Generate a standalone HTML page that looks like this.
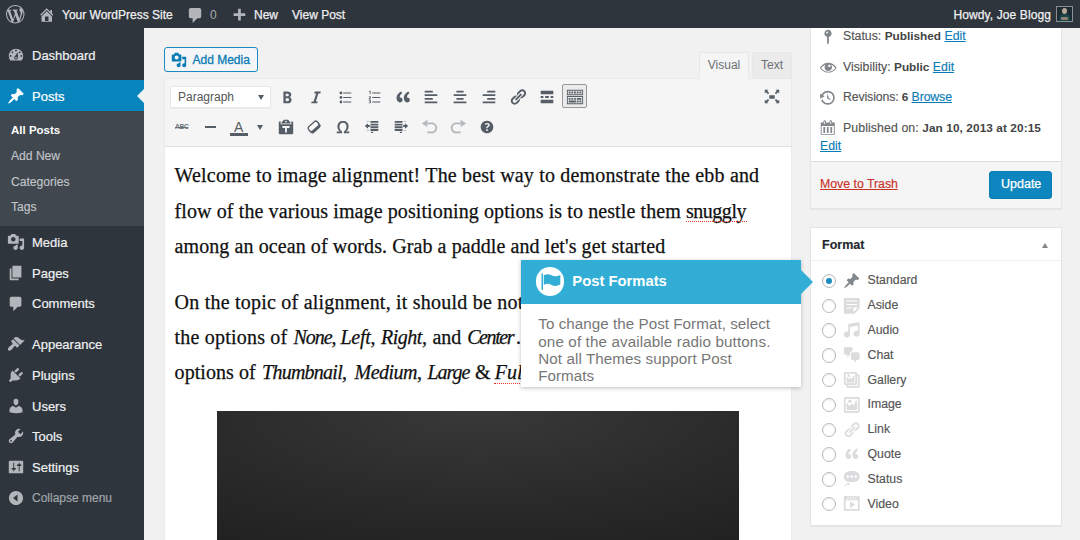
<!DOCTYPE html>
<html>
<head>
<meta charset="utf-8">
<title>Edit Post</title>
<style>
*{box-sizing:border-box;margin:0;padding:0}
html,body{width:1080px;height:540px;overflow:hidden;background:#f1f1f1;font-family:"Liberation Sans",sans-serif;}
body{position:relative}
.abs{position:absolute}
svg{display:block;position:absolute;overflow:visible}
.t{position:absolute;white-space:nowrap;line-height:1}
/* admin bar */
#adminbar{position:absolute;left:0;top:0;width:1080px;height:28px;background:#2e353d;z-index:50}
#adminbar .t{color:#f0f0f1;font-size:12px;top:8.5px;-webkit-text-stroke:0.25px currentColor}
/* sidebar */
#menu{position:absolute;left:0;top:28px;width:144px;height:512px;background:#2e353d}
#menu .top{position:absolute;left:32px;color:#f0f0f1;font-size:13px;-webkit-text-stroke:0.2px currentColor;white-space:nowrap;line-height:1}
#menu .sub{position:absolute;left:11px;color:#c0c4c8;font-size:12.1px;-webkit-text-stroke:0.15px currentColor;white-space:nowrap;line-height:1}
#posts{position:absolute;left:0;top:52px;width:144px;height:31px;background:#0885bd}
#submenu{position:absolute;left:0;top:83px;width:144px;height:115px;background:#40474e}
/* editor */
#tabs .tab{position:absolute;top:52px;height:27px;font-size:12px;color:#6c7075;border:1px solid #e8e8e8;text-align:center;line-height:25px}
#toolbar{position:absolute;left:164px;top:78px;width:628px;height:69px;background:#f5f5f5;border:1px solid #e9e9e9;border-bottom:1px solid #e0e0e0}
#editor{position:absolute;left:164px;top:147px;width:628px;height:393px;background:#fff;border-left:1px solid #ececec;border-right:1px solid #ececec}
.ln{position:absolute;white-space:pre;font-family:"Liberation Serif",serif;font-size:20px;color:#111;line-height:1;-webkit-text-stroke:0.250px #111}
/* meta boxes */
.box{position:absolute;left:810px;width:252px;background:#fff;border:1px solid #e5e5e5;box-shadow:0 1px 1px rgba(0,0,0,.04)}
.m{position:absolute;white-space:nowrap;line-height:1;font-size:12.300px;color:#555;-webkit-text-stroke:0.150px currentColor}
.m b{color:#444;font-size:11.800px;-webkit-text-stroke:0}
a,.lk{color:#0a7cb5;text-decoration:underline}
.rad{width:14.500px;height:14.500px;border-radius:50%;border:1px solid #b4b9be;background:#fff;box-shadow:inset 0 1px 2px rgba(0,0,0,.08)}
</style>
</head>
<body>

<!-- ============ ADMIN BAR ============ -->
<div id="adminbar">
  <svg style="left:6px;top:5px" width="18.5" height="18.5" viewBox="0 0 20 20" fill="#b2b6ba"><path d="M20 10c0-5.51-4.49-10-10-10C4.48 0 0 4.49 0 10c0 5.52 4.48 10 10 10 5.51 0 10-4.48 10-10zM7.78 15.37L4.37 6.22c.55-.02 1.17-.08 1.17-.08.5-.06.44-1.13-.06-1.11 0 0-1.45.11-2.37.11-.18 0-.37 0-.58-.01C4.12 2.69 6.87 1.11 10 1.11c2.33 0 4.45.87 6.05 2.34-.68-.11-1.65.39-1.65 1.58 0 .74.45 1.36.9 2.1.35.61.55 1.36.55 2.46 0 1.49-1.4 5-1.4 5l-3.03-8.37c.54-.02.82-.17.82-.17.5-.05.44-1.25-.06-1.22 0 0-1.44.12-2.38.12-.87 0-2.33-.12-2.33-.12-.5-.03-.56 1.2-.06 1.22l.92.08 1.26 3.41zM17.41 10c.24-.64.74-1.87.43-4.25.7 1.29 1.05 2.71 1.05 4.25 0 3.29-1.73 6.24-4.4 7.78.97-2.59 1.94-5.2 2.92-7.78zM6.1 18.09C3.12 16.65 1.11 13.53 1.11 10c0-1.3.23-2.48.72-3.59C3.25 10.3 4.67 14.2 6.1 18.09zm4.03-6.63l2.58 6.98c-.86.29-1.76.45-2.71.45-.79 0-1.57-.11-2.29-.33.81-2.38 1.62-4.74 2.42-7.1z"/></svg>
  <svg style="left:38px;top:6px" width="17.5" height="17.5" viewBox="0 0 20 20" fill="#b2b6ba"><path d="M16 8.5l1.53 1.53-1.06 1.06L10 4.62l-6.47 6.47-1.06-1.06L10 2.5l4 4v-2h2v4zm-6-2.46l6 5.99V18H4v-5.970zM12 17v-5H8v5h4z"/></svg>
  <svg style="left:186px;top:5.800px" width="19" height="19" viewBox="0 0 20 20" fill="#b2b6ba"><path d="M5 2h9c1.1 0 2 .9 2 2v7c0 1.1-.9 2-2 2h-2l-5 5v-5H5c-1.1 0-2-.9-2-2V4c0-1.1.9-2 2-2z"/></svg>
  <svg style="left:230.250px;top:7px" width="18" height="18" viewBox="0 0 20 20" fill="#b2b6ba"><path d="M17 7v3h-5v5H9v-5H4V7h5V2h3v5h5z"/></svg>

  <span class="t" style="left:62px">Your WordPress Site</span>
  <span class="t" style="left:210px;color:#a7aaad;-webkit-text-stroke:0">0</span>
  <span class="t" style="left:254px">New</span>
  <span class="t" style="left:292px">View Post</span>
  <span class="t" style="left:953.500px;letter-spacing:0.110px">Howdy, Joe Blogg</span>
  <div class="abs" id="avatar" style="left:1056px;top:6px;width:17px;height:16px;background:#1d2b33;border:1px solid #8a8f94;overflow:hidden"><div class="abs" style="left:5px;top:1px;width:5px;height:6px;border-radius:50%;background:#b8a898"></div><div class="abs" style="left:2px;top:7px;width:11px;height:9px;border-radius:4px 4px 0 0;background:#184648"></div><div class="abs" style="left:4px;top:10px;width:7px;height:3px;border-radius:1px;background:#8f7f70"></div></div>
</div>

<!-- ============ SIDEBAR ============ -->
<div id="menu">
  <div id="posts"></div>
  <div id="submenu"></div>
  <span class="top" style="top:21px">Dashboard</span>
  <span class="top" style="top:62px;color:#fff">Posts</span>
  <span class="sub" style="top:97px;color:#fff;font-weight:bold;font-size:11.5px;-webkit-text-stroke:0">All Posts</span>
  <span class="sub" style="top:122px">Add New</span>
  <span class="sub" style="top:148px">Categories</span>
  <span class="sub" style="top:173px">Tags</span>
  <span class="top" style="top:208px">Media</span>
  <span class="top" style="top:239px">Pages</span>
  <span class="top" style="top:269px">Comments</span>
  <span class="top" style="top:310px">Appearance</span>
  <span class="top" style="top:341px">Plugins</span>
  <span class="top" style="top:372px">Users</span>
  <span class="top" style="top:402px">Tools</span>
  <span class="top" style="top:433px">Settings</span>
  <span class="top" style="top:464px;font-size:12px;color:#a0a5aa">Collapse menu</span>
  <svg style="left:7.0px;top:17.5px" width="18" height="18" viewBox="0 0 20 20" fill="#b2b6ba"><path d="M3.76 16h12.48c1.1-1.37 1.76-3.11 1.76-5 0-4.42-3.58-8-8-8s-8 3.58-8 8c0 1.89.66 3.63 1.76 5zM10 4c.55 0 1 .45 1 1s-.45 1-1 1-1-.45-1-1 .45-1 1-1zM6 6c.55 0 1 .45 1 1s-.45 1-1 1-1-.45-1-1 .45-1 1-1zm8 0c.55 0 1 .45 1 1s-.45 1-1 1-1-.45-1-1 .45-1 1-1zm-5.370 5.550L12 7v6c0 1.1-.9 2-2 2s-2-.9-2-2c0-.57.24-1.080.63-1.450zM4 10c.55 0 1 .45 1 1s-.45 1-1 1-1-.45-1-1 .45-1 1-1zm12 0c.55 0 1 .45 1 1s-.45 1-1 1-1-.45-1-1 .45-1 1-1zm-5 3c0-.55-.45-1-1-1s-1 .45-1 1 .45 1 1 1 1-.45 1-1z"/></svg>
  <svg style="left:7.0px;top:58.5px" width="18" height="18" viewBox="0 0 20 20" fill="#fff"><path d="M10.44 3.02l1.82-1.82 6.36 6.35-1.83 1.82c-1.05-.68-2.48-.57-3.41.36l-.75.75c-.92.93-1.04 2.35-.35 3.41l-1.83 1.82-2.41-2.41-2.8 2.79c-.42.42-3.38 2.71-3.8 2.29s1.86-3.39 2.28-3.81l2.79-2.79L4.1 9.36l1.83-1.82c1.05.69 2.48.57 3.4-.36l.75-.75c.93-.92 1.05-2.35.36-3.41z"/></svg>
  <svg style="left:7.0px;top:204.5px" width="18" height="18" viewBox="0 0 20 20" fill="#b2b6ba"><path d="M13 11V4c0-.55-.45-1-1-1h-1.670L9 1H5L3.670 3H2c-.55 0-1 .45-1 1v7c0 .55.45 1 1 1h10c.55 0 1-.45 1-1zM7 4.500c1.380 0 2.500 1.120 2.500 2.500S8.380 9.500 7 9.500 4.500 8.380 4.500 7 5.620 4.500 7 4.500zM14 6h5v10.500c0 1.380-1.120 2.500-2.500 2.500S14 17.880 14 16.500s1.120-2.500 2.500-2.500c.170 0 .340.020.500.050V9h-3V6zm-4 8.050V13h2v3.500c0 1.380-1.120 2.500-2.500 2.500S7 17.880 7 16.500 8.120 14 9.500 14c.170 0 .340.020.500.050z"/></svg>
  <svg style="left:7.0px;top:235.5px" width="18" height="18" viewBox="0 0 20 20" fill="#b2b6ba"><path d="M6 15V2h10v13H6zm-1 1h8v2H3V5h2v11z"/></svg>
  <svg style="left:7.0px;top:266.5px" width="18" height="18" viewBox="0 0 20 20" fill="#b2b6ba"><path d="M5 2h9c1.1 0 2 .9 2 2v7c0 1.1-.9 2-2 2h-2l-5 5v-5H5c-1.1 0-2-.9-2-2V4c0-1.1.9-2 2-2z"/></svg>
  <svg style="left:7.0px;top:307.0px" width="18" height="18" viewBox="0 0 20 20" fill="#b2b6ba"><path d="M14.480 11.060L7.410 3.990l1.500-1.500c.5-.560 2.300-.470 3.510.320 1.210.8 1.430 1.280 2.910 2.100 1.180.640 2.450 1.260 4.450.850zm-.710.710L6.700 4.700 4.930 6.470c-.390.390-.390 1.020 0 1.410l1.060 1.060c.390.390.390 1.030 0 1.420-.6.600-1.430 1.110-2.210 1.690-.350.260-.7.530-1.010.840C1.430 14.230.400 16.080 1.400 17.070c.990 1 2.840-.030 4.180-1.360.310-.310.580-.660.850-1.020.570-.780 1.080-1.610 1.690-2.210.390-.390 1.020-.390 1.410 0l1.060 1.060c.390.390 1.020.390 1.410 0z"/></svg>
  <svg style="left:7.0px;top:338.0px" width="18" height="18" viewBox="0 0 20 20" fill="#b2b6ba"><path d="M13.110 4.360L9.870 7.600 8 5.730l3.240-3.240c.350-.340 1.050-.200 1.560.320.520.510.660 1.210.310 1.550zm-8 1.770l.910-1.120 9.010 9.010-1.190.840c-.710.710-2.630 1.160-3.820 1.160H6.140L4.900 17.260c-.590.590-1.540.590-2.120 0-.590-.580-.590-1.530 0-2.120l1.240-1.240v-3.880c0-1.130.400-3.190 1.090-3.890zm7.260 3.970l3.240-3.240c.340-.350 1.040-.210 1.550.310.520.510.660 1.210.310 1.550l-3.240 3.250z"/></svg>
  <svg style="left:7.0px;top:368.5px" width="18" height="18" viewBox="0 0 20 20" fill="#b2b6ba"><path d="M10 9.250c-2.270 0-2.730-3.440-2.730-3.440C7 4.020 7.820 2 9.970 2c2.160 0 2.980 2.020 2.710 3.810 0 0-.410 3.440-2.680 3.440zm0 2.570L12.720 10c2.390 0 4.520 2.330 4.520 4.530v2.490s-3.650 1.130-7.240 1.130c-3.650 0-7.240-1.130-7.240-1.130v-2.490c0-2.250 1.940-4.480 4.470-4.480z"/></svg>
  <svg style="left:7.0px;top:399.0px" width="18" height="18" viewBox="0 0 20 20" fill="#b2b6ba"><path d="M16.680 9.770c-1.340 1.340-3.300 1.670-4.950.990l-5.410 6.520c-.990.990-2.590.990-3.580 0s-.990-2.590 0-3.570l6.520-5.420c-.680-1.650-.350-3.610.990-4.950 1.280-1.280 3.120-1.620 4.720-1.060l-2.890 2.890 2.820 2.820 2.860-2.870c.530 1.580.180 3.390-1.080 4.650zM3.810 16.210c.400.390 1.040.390 1.430 0 .400-.400.400-1.040 0-1.430-.390-.400-1.030-.400-1.430 0-.390.390-.390 1.030 0 1.430z"/></svg>
  <svg style="left:7.0px;top:429.5px" width="18" height="18" viewBox="0 0 20 20" fill="#b2b6ba"><path d="M18 16V4c0-.55-.45-1-1-1H3c-.55 0-1 .45-1 1v12c0 .55.45 1 1 1h14c.55 0 1-.45 1-1zM8 11h1c.55 0 1 .45 1 1s-.45 1-1 1H8v1.500c0 .280-.220.500-.500.500s-.500-.220-.500-.500V13H6c-.55 0-1-.45-1-1s.45-1 1-1h1V5.500c0-.280.220-.500.500-.500s.500.220.500.500V11zm5-2h-1c-.55 0-1-.45-1-1s.45-1 1-1h1V5.500c0-.280.220-.500.500-.500s.500.220.500.500V7h1c.55 0 1 .45 1 1s-.45 1-1 1h-1v5.500c0 .280-.220.500-.500.500s-.500-.220-.500-.500V9z"/></svg>
  <svg style="left:7.0px;top:460.5px" width="18" height="18" viewBox="0 0 20 20" fill="#b2b6ba" fill-rule="evenodd"><path d="M10 2.160c4.330 0 7.840 3.510 7.840 7.840s-3.510 7.840-7.840 7.840S2.160 14.330 2.160 10 5.670 2.160 10 2.160zM11.700 14V6L6.700 10z"/></svg>
</div>
<!-- active arrow -->
<div class="abs" style="left:137px;top:89px;width:0;height:0;border-top:7px solid transparent;border-bottom:7px solid transparent;border-right:7px solid #f1f1f1"></div>

<!-- ============ ADD MEDIA ============ -->
<div class="abs" id="addmedia" style="left:164px;top:47px;width:94px;height:25px;border:1px solid #1a8ac0;border-radius:3px;background:#f3f5f6"></div>
<svg style="left:171.0px;top:52.0px" width="16" height="16" viewBox="0 0 20 20" fill="#0a7cb5"><path d="M13 11V4c0-.55-.45-1-1-1h-1.670L9 1H5L3.670 3H2c-.55 0-1 .45-1 1v7c0 .55.45 1 1 1h10c.55 0 1-.45 1-1zM7 4.500c1.380 0 2.500 1.120 2.500 2.500S8.380 9.500 7 9.500 4.500 8.380 4.500 7 5.620 4.500 7 4.500zM14 6h5v10.500c0 1.380-1.120 2.500-2.500 2.500S14 17.880 14 16.500s1.120-2.500 2.500-2.500c.170 0 .340.020.500.050V9h-3V6zm-4 8.050V13h2v3.500c0 1.380-1.120 2.500-2.500 2.500S7 17.880 7 16.500 8.120 14 9.500 14c.170 0 .340.020.500.050z"/></svg>
<span class="t" style="left:192.500px;top:54px;font-size:12px;color:#0a7cb5;-webkit-text-stroke:0.3px #0a7cb5">Add Media</span>

<!-- ============ TABS ============ -->
<div id="tabs">
  <div class="tab" style="left:699px;width:50px;background:#f5f5f5;border-bottom-color:#f5f5f5;z-index:2">Visual</div>
  <div class="tab" style="left:752px;width:40px;background:#ebebeb;">Text</div>
</div>

<!-- ============ TOOLBAR ============ -->
<div id="toolbar"></div>
<div class="abs" style="left:169.500px;top:85.500px;width:101px;height:22px;background:#fff;border:1px solid #e8e8e8;box-shadow:0 1px 1px rgba(0,0,0,.04)"></div>
<span class="t" style="left:178px;top:91px;font-size:12px;color:#555">Paragraph</span>
<div class="abs" style="left:258px;top:94.500px;width:0;height:0;border-left:3.300px solid transparent;border-right:3.300px solid transparent;border-top:5.500px solid #555d66"></div>
<div class="abs" style="left:562px;top:84px;width:25px;height:24px;background:#ebebeb;border:1px solid #999;border-radius:2px"></div>
<svg style="left:278.3px;top:87.7px" width="18" height="18" viewBox="0 0 20 20" fill="#555d66"><path d="M6 4v13h4.540c1.370 0 2.460-.330 3.260-1 .8-.660 1.200-1.580 1.200-2.770 0-.840-.170-1.510-.510-2.010s-.9-.850-1.670-1.030v-.090c.570-.1 1.020-.4 1.360-.9s.510-1.130.510-1.910c0-1.140-.390-1.980-1.170-2.500C12.750 4.260 11.500 4 9.780 4H6zm2.570 5.150V6.260h1.360c.730 0 1.270.110 1.610.320.340.220.510.580.510 1.070 0 .540-.160.920-.470 1.150s-.820.350-1.510.350h-1.500zm0 2.190h1.600c1.440 0 2.160.530 2.160 1.610 0 .6-.170 1.050-.510 1.340s-.860.430-1.570.430H8.570v-3.380z"/></svg>
<svg style="left:307.1px;top:87.7px" width="18" height="18" viewBox="0 0 20 20" fill="#555d66"><path d="M14.780 6h-2.130l-2.800 9h2.120l-.620 2H4.600l.620-2h2.140l2.800-9H8.030l.620-2h6.750z"/></svg>
<svg style="left:335.9px;top:87.7px" width="18" height="18" viewBox="0 0 20 20" fill="#555d66"><path d="M5.500 7C4.670 7 4 6.330 4 5.500 4 4.680 4.670 4 5.500 4 6.320 4 7 4.680 7 5.500 7 6.330 6.320 7 5.500 7zM8 5h9v1H8V5zm-2.500 7c-.830 0-1.500-.670-1.500-1.500C4 9.680 4.670 9 5.500 9c.820 0 1.500.680 1.500 1.500 0 .830-.680 1.500-1.500 1.500zM8 10h9v1H8v-1zm-2.500 7c-.830 0-1.500-.670-1.500-1.500 0-.820.670-1.500 1.500-1.500.820 0 1.500.680 1.500 1.500 0 .830-.680 1.500-1.500 1.500zM8 15h9v1H8v-1z"/></svg>
<svg style="left:364.7px;top:87.7px" width="18" height="18" viewBox="0 0 20 20" fill="#555d66"><path d="M8 5h9v1H8zM8 10h9v1H8zM8 15h9v1H8z"/><path d="M5.300 3h.9v4h-.9V4.200l-.8.500-.3-.6zM4.100 9.200c.4-.4 1-.5 1.500-.4.600.1 1 .6.900 1.200-.1.700-.8 1.100-1.300 1.700h1.400v.7H4v-.6c.5-.6 1.300-1.100 1.600-1.700.1-.3-.1-.6-.4-.6-.3 0-.5.200-.8.400zM4.100 13.400c.7-.4 1.700-.5 2.200 0 .4.400.3 1.100-.3 1.400.7.200.9.900.6 1.500-.5.800-1.800.8-2.600.4v-.7c.5.300 1.200.4 1.600.1.300-.3.100-.7-.3-.8h-.7v-.6c.4 0 .9 0 1-.4.100-.4-.4-.5-.7-.4-.2 0-.4.200-.6.300z"/></svg>
<svg style="left:393.5px;top:87.7px" width="18" height="18" viewBox="0 0 20 20" fill="#555d66"><path d="M9.490 13.220c0-.740-.2-1.380-.610-1.900-.620-.780-1.830-.880-2.530-.720-.290-1.650 1.110-3.750 2.920-4.650L7.880 4c-2.730 1.300-5.420 4.280-4.960 8.050C3.210 14.430 4.590 16 6.540 16c.850 0 1.560-.250 2.120-.750s.830-1.180.830-2.030zm8.050 0c0-.740-.2-1.380-.610-1.900-.630-.780-1.830-.880-2.530-.720-.290-1.650 1.110-3.750 2.920-4.650L15.930 4c-2.730 1.300-5.410 4.280-4.950 8.050.290 2.380 1.660 3.950 3.610 3.950.850 0 1.560-.250 2.120-.750s.830-1.180.830-2.030z"/></svg>
<svg style="left:422.3px;top:87.7px" width="18" height="18" viewBox="0 0 20 20" fill="#555d66"><path d="M12 5V3H3v2h9zm5 4V7H3v2h14zm-5 4v-2H3v2h9zm5 4v-2H3v2h14z"/></svg>
<svg style="left:451.1px;top:87.7px" width="18" height="18" viewBox="0 0 20 20" fill="#555d66"><path d="M14 5V3H6v2h8zm3 4V7H3v2h14zm-3 4v-2H6v2h8zm3 4v-2H3v2h14z"/></svg>
<svg style="left:479.9px;top:87.7px" width="18" height="18" viewBox="0 0 20 20" fill="#555d66"><path d="M17 5V3H8v2h9zm0 4V7H3v2h14zm0 4v-2H8v2h9zm0 4v-2H3v2h14z"/></svg>
<svg style="left:508.7px;top:87.7px" width="18" height="18" viewBox="0 0 20 20" fill="#555d66"><path d="M17.740 2.760c1.680 1.690 1.680 4.410 0 6.100l-1.530 1.520c-1.120 1.120-2.700 1.470-4.140 1.090l2.620-2.610.760-.770.760-.760c.840-.840.840-2.200 0-3.040-.840-.850-2.200-.850-3.040 0l-.770.760-3.380 3.380c-.370-1.440-.020-3.020 1.100-4.140l1.520-1.530c1.690-1.680 4.420-1.680 6.100 0zM8.590 13.430l5.340-5.340c.420-.420.420-1.100 0-1.520-.440-.430-1.130-.390-1.530 0l-5.330 5.340c-.420.420-.420 1.100 0 1.520.440.430 1.130.390 1.520 0zm-.760 2.290l4.140-4.150c.380 1.440.030 3.020-1.090 4.140l-1.520 1.530c-1.690 1.680-4.410 1.680-6.100 0-1.680-1.680-1.680-4.420 0-6.100l1.530-1.520c1.120-1.120 2.700-1.470 4.140-1.100l-4.140 4.150c-.850.840-.850 2.200 0 3.050.840.840 2.200.840 3.040 0z"/></svg>
<svg style="left:537.5px;top:87.7px" width="18" height="18" viewBox="0 0 20 20" fill="#555d66"><path d="M17 7V3H3v4h14zM6 11V9H3v2h3zm6 0V9H8v2h4zm5 0V9h-3v2h3zm0 6v-4H3v4h14z"/></svg>
<svg style="left:565.7px;top:87.7px" width="18" height="18" viewBox="0 0 20 20" fill="#555d66"><path d="M19 2v6H1V2h18zm-1 5V3H2v4h16zM5 4v2H3V4h2zm3 0v2H6V4h2zm3 0v2H9V4h2zm3 0v2h-2V4h2zm3 0v2h-2V4h2zm2 5v9H1V9h18zm-1 8v-7H2v7h16zM5 11v2H3v-2h2zm3 0v2H6v-2h2zm3 0v2H9v-2h2zm6 0v2h-5v-2h5zm-6 3v2H3v-2h8zm3 0v2h-2v-2h2zm3 0v2h-2v-2h2z"/></svg>
<svg style="left:763.0px;top:87.7px" width="18" height="18" viewBox="0 0 20 20" fill="#555d66"><path d="M7 8h6v4H7zM2 13v4h4l-1.300-1.300L6.900 13.500 5.500 12.100 3.300 14.300zM14 2l1.300 1.300L13.100 5.500l1.400 1.400 2.200-2.200L18 6V2zM6 2H2v4l1.300-1.300L5.500 6.900 6.900 5.500 4.700 3.300zM14.500 12.100L13.100 13.500l2.200 2.200L14 17h4v-4l-1.300 1.300z"/></svg>
<svg style="left:276.5px;top:117.9px" width="18" height="18" viewBox="0 0 20 20" fill="#555d66"><path d="M12.380 2L15 5v1H5V5l2.640-3h4.740zM10 5c.55 0 1-.44 1-1 0-.55-.45-1-1-1s-1 .45-1 1c0 .56.45 1 1 1zm5.450-1H17c.55 0 1 .45 1 1v12c0 .56-.45 1-1 1H3c-.55 0-1-.44-1-1V5c0-.55.45-1 1-1h1.550L4 4.630V7h12V4.630zM14 11V9H6v2h3v5h2v-5h3z"/></svg>
<svg style="left:0;top:0" width="1080" height="540" viewBox="0 0 1080 540"><g transform="rotate(-42 313.900 126.800)"><rect x="308.200" y="124.300" width="11.400" height="6.400" rx="2" fill="#555d66" stroke="#555d66" stroke-width="1.300"/><rect x="308.200" y="123.300" width="11.400" height="5.800" rx="1.900" fill="#fdfdfd" stroke="#555d66" stroke-width="1.300"/></g></svg>
<svg style="left:334.1px;top:117.9px" width="18" height="18" viewBox="0 0 20 20" fill="#555d66"><path d="M10 5.400c1.270 0 2.240.360 2.910 1.080.660.710 1 1.760 1 3.130 0 1.280-.230 2.370-.690 3.270-.470.890-1.270 1.520-2.220 2.120v2h6v-2h-3.690c.920-.640 1.620-1.340 2.120-2.340.490-.990.740-2.130.740-3.410 0-1.790-.550-3.210-1.650-4.260-1.090-1.040-2.600-1.560-4.520-1.560-1.930 0-3.440.520-4.540 1.560C4.360 6.030 3.800 7.450 3.800 9.250c0 1.280.250 2.420.750 3.400.490.990 1.200 1.700 2.120 2.350H3v2h6v-2c-.980-.640-1.800-1.280-2.240-2.170-.450-.890-.670-1.960-.670-3.220 0-1.370.330-2.410 1-3.130C7.750 5.760 8.720 5.400 10 5.400z"/></svg>
<svg style="left:362.9px;top:117.9px" width="18" height="18" viewBox="0 0 20 20" fill="#555d66"><path d="M8.300 3.300h8.700v2.100H8.300zM8.300 6.300h8.700v2.100H8.300zM8.300 9.300h8.700v2.100H8.300zM8.300 12.300h8.700v2.100H8.300zM9 15.400h2.300v1.200H9zM2 8.800l3.600-3v2h2v2.100h-2v2z"/><path opacity=".45" d="M4 3.300h3v.9H4zM4 13.400h3v.9H4z"/></svg>
<svg style="left:391.7px;top:117.9px" width="18" height="18" viewBox="0 0 20 20" fill="#555d66"><path d="M3 3.300h8.700v2.100H3zM3 6.300h8.700v2.100H3zM3 9.300h8.700v2.100H3zM3 12.300h8.700v2.100H3zM8.700 15.400h2.300v1.200H8.700zM18 8.800l-3.600-3v2h-2v2.100h2v2z"/><path opacity=".45" d="M13 3.300h3v.9h-3zM13 13.400h3v.9h-3z"/></svg>
<svg style="left:420.5px;top:117.9px" width="18" height="18" viewBox="0 0 20 20" fill="#b4b9be"><path d="M12 5H7V2L1 6l6 4V7h5c2.200 0 4 1.800 4 4s-1.800 4-4 4H7v2h5c3.300 0 6-2.700 6-6s-2.700-6-6-6z"/></svg>
<svg style="left:449.3px;top:117.9px" width="18" height="18" viewBox="0 0 20 20" fill="#b4b9be"><path d="M8 5h5V2l6 4-6 4V7H8c-2.200 0-4 1.800-4 4s1.800 4 4 4h5v2H8c-3.300 0-6-2.700-6-6s2.700-6 6-6z"/></svg>
<svg style="left:478.1px;top:117.9px" width="18" height="18" viewBox="0 0 20 20" fill="#555d66"><path d="M17 10c0-3.870-3.140-7-7-7-3.870 0-7 3.130-7 7s3.130 7 7 7c3.860 0 7-3.130 7-7zm-6.300 1.480H9.140v-.430c0-.380.080-.7.240-.980s.460-.570.880-.890c.410-.290.680-.530.810-.710.140-.180.200-.390.200-.620 0-.250-.090-.440-.280-.580-.190-.130-.450-.190-.790-.190-.580 0-1.250.190-2 .570l-.640-1.280c.870-.490 1.800-.740 2.770-.740.810 0 1.450.2 1.920.580.480.390.710.910.710 1.550 0 .430-.090.800-.290 1.110-.190.320-.570.670-1.110 1.060-.380.280-.610.490-.710.630-.1.150-.150.340-.150.570v.350zm-1.470 2.740c-.180-.170-.270-.420-.270-.730 0-.330.080-.580.260-.750s.430-.250.770-.250c.320 0 .570.090.750.260s.270.420.270.740c0 .3-.090.550-.270.720-.180.180-.430.270-.750.270-.330 0-.580-.090-.760-.260z"/></svg>
<span class="t" style="left:175px;top:123.700px;font-size:6.600px;font-weight:bold;color:#6a7178;letter-spacing:-0.200px">ABC</span>
<div class="abs" style="left:174.500px;top:126.500px;width:13.500px;height:1px;background:#6a7178"></div>
<div class="abs" style="left:205px;top:125.700px;width:11px;height:2px;background:#555d66"></div>
<span class="t" style="left:234px;top:119.5px;font-size:14px;color:#555d66">A</span>
<div class="abs" style="left:230px;top:133px;width:18px;height:2.500px;background:#555d66"></div>
<div class="abs" style="left:257px;top:124.800px;width:0;height:0;border-left:3.200px solid transparent;border-right:3.200px solid transparent;border-top:5.200px solid #555d66"></div>

<!-- ============ EDITOR ============ -->
<div id="editor"></div>
<!--LINES-->
<span class="ln" style="left:174.6px;top:165.2px;letter-spacing:0.177px">Welcome to image alignment! The best way to demonstrate the ebb and</span>
<span class="ln" style="left:174.6px;top:200.5px;letter-spacing:0.101px">flow of the various image positioning options is to nestle them </span>
<span class="ln" id="snug" style="left:686.0px;top:200.5px;letter-spacing:-0.478px">snuggly</span>
<span class="ln" style="left:174.6px;top:235.7px;letter-spacing:0.084px">among an ocean of words. Grab a paddle and let&#x27;s get started</span>
<span class="ln" style="left:174.6px;top:291.8px;letter-spacing:0.221px">On the topic of alignment, it should be not</span>
<span class="ln" style="left:523.5px;top:291.8px">ed that users can choose from</span>
<span class="ln" style="left:174.6px;top:326.8px;letter-spacing:0.200px">the options of</span>
<span class="ln" style="left:293.5px;top:326.8px;letter-spacing:-1.055px;font-style:italic">None</span>
<span class="ln" style="left:331.5px;top:326.8px;letter-spacing:-1.500px">,</span>
<span class="ln" style="left:340.5px;top:326.8px;letter-spacing:-0.281px;font-style:italic">Left</span>
<span class="ln" style="left:370.5px;top:326.8px;letter-spacing:-1.500px">,</span>
<span class="ln" style="left:381.0px;top:326.8px;letter-spacing:-0.491px;font-style:italic">Right,</span>
<span class="ln" style="left:432.6px;top:326.8px;letter-spacing:-0.130px">and</span>
<span class="ln" style="left:467.2px;top:326.8px;letter-spacing:-1.423px;font-style:italic">Center</span>
<span class="ln" style="left:516.0px;top:326.8px;letter-spacing:-1.800px">.</span>
<span class="ln" style="left:519.2px;top:326.8px"> In addition, they also get the</span>
<span class="ln" style="left:174.6px;top:361.8px;letter-spacing:0.054px">options of</span>
<span class="ln" style="left:262.0px;top:361.8px;letter-spacing:-0.743px;font-style:italic">Thumbnail</span>
<span class="ln" style="left:342.0px;top:361.8px;letter-spacing:-1.600px">,</span>
<span class="ln" style="left:354.6px;top:361.8px;letter-spacing:-0.524px;font-style:italic">Medium</span>
<span class="ln" style="left:417.0px;top:361.8px;letter-spacing:-1.600px">,</span>
<span class="ln" style="left:427.5px;top:361.8px;letter-spacing:-1.049px;font-style:italic">Large</span>
<span class="ln" style="left:475.0px;top:361.8px;letter-spacing:-1.962px">&amp;</span>
<span class="ln" id="full" style="left:494.7px;top:361.8px;font-style:italic">Fullsize</span>
<!--/LINES-->
<div class="abs" style="left:686px;top:220.500px;width:61px;height:0;border-top:1.800px dotted #e8392b"></div>
<div class="abs" style="left:494px;top:383px;width:60px;height:0;border-top:1.800px dotted #e8392b"></div>
<div class="abs" id="darkimg" style="left:217px;top:411px;width:522px;height:129px;background:radial-gradient(ellipse 90% 120% at 50% 0%,#393939 0%,#2b2b2b 55%,#212121 100%)"></div>

<!-- ============ PUBLISH BOX ============ -->
<div class="box" style="top:-10px;height:219px"></div>
<div class="abs" style="left:811px;top:161px;width:250px;height:47px;background:#f5f5f5;border-top:1px solid #ddd"></div>
<span class="m" style="left:843px;top:30px">Status: <b>Published</b> <span class="lk">Edit</span></span>
<span class="m" style="left:843px;top:61px">Visibility: <b>Public</b> <span class="lk">Edit</span></span>
<span class="m" style="left:843px;top:91px;letter-spacing:-0.120px">Revisions: <b>6</b> <span class="lk">Browse</span></span>
<span class="m" style="left:843px;top:122px;letter-spacing:0.095px">Published on: <b>Jan 10, 2013 at 20:15</b></span>
<span class="m" style="left:820px;top:140px"><span class="lk">Edit</span></span>
<span class="m" style="left:820px;top:178px;color:#c8322b;text-decoration:underline">Move to Trash</span>
<div class="abs" style="left:989px;top:171px;width:63px;height:28px;background:#0d85be;border-radius:3px;border:1px solid #0b7db3"></div>
<span class="t" style="left:1001px;top:178px;font-size:12.500px;color:#fff;-webkit-text-stroke:0.250px #fff">Update</span>
<svg style="left:819.3px;top:27.5px" width="18" height="18" viewBox="0 0 20 20" fill="#82878c"><path d="M14 6c0 1.860-1.280 3.410-3 3.860V16c0 1-2 2-2 2V9.860c-1.720-.450-3-2-3-3.860 0-2.210 1.790-4 4-4s4 1.790 4 4zM8 5c0 .55.45 1 1 1s1-.45 1-1-.45-1-1-1-1 .45-1 1z"/></svg>
<svg style="left:818.8px;top:57.7px" width="18.5" height="18.5" viewBox="0 0 20 20" fill="#82878c"><path d="M18.300 9.500C15 4.900 8.500 3.800 3.900 7.200c-1.200.9-2.200 2-2.900 3.300.7 1.300 1.700 2.400 2.900 3.300 4.600 3.400 11.100 2.300 14.400-2.300.3-.4.500-.8.700-1.200-.2-.4-.4-.7-.7-1.100zM10.300 7.600c.5-.5 1.300-.5 1.800 0s.5 1.300 0 1.800-1.300.5-1.800 0-.5-1.300 0-1.800zM10 14.900C6.900 14.900 4 13.300 2.300 10.700 3.500 9 5.100 7.800 7 7.200c-.7.800-1 1.700-1 2.700 0 2.200 1.700 4.100 4 4.100 2.200 0 4.100-1.700 4.100-4v-.1c0-1-.4-2-1.100-2.700 1.900.6 3.500 1.800 4.700 3.500-1.700 2.600-4.600 4.200-7.700 4.200z"/></svg>
<svg style="left:819.4px;top:88.5px" width="17.5" height="17.5" viewBox="0 0 20 20" fill="#82878c"><path d="M13.650 2.880c3.930 2.010 5.480 6.840 3.470 10.770s-6.830 5.480-10.770 3.470c-1.870-.960-3.200-2.560-3.860-4.400l1.640-1.030c.450 1.570 1.520 2.950 3.080 3.760 3.010 1.540 6.690.350 8.230-2.660 1.550-3.010.360-6.690-2.650-8.240C9.780 3.010 6.100 4.200 4.560 7.210l1.880.970-4.950 3.080-.390-5.820 1.780.910C4.900 2.400 9.750.890 13.650 2.880zm-4.360 7.830C9.110 10.530 9 10.280 9 10c0-.070.030-.120.040-.190h-.010L10 5l.970 4.810L14 13l-4.500-2.120.020-.020c-.080-.040-.160-.090-.230-.150z"/></svg>
<svg style="left:819.4px;top:118.7px" width="17.5" height="17.5" viewBox="0 0 20 20" fill="#82878c"><path d="M15 4h3v14H2V4h3V3c0-.830.670-1.500 1.500-1.500S8 2.170 8 3v1h4V3c0-.830.670-1.500 1.500-1.500S15 2.170 15 3v1zM6 3v2.500c0 .280.220.500.500.500s.500-.220.500-.500V3c0-.280-.220-.500-.500-.500S6 2.720 6 3zm7 0v2.500c0 .280.220.500.500.500s.500-.220.500-.500V3c0-.280-.220-.500-.500-.500s-.500.220-.500.500zm4 14V8H3v9h14zM7 16V9H5v7h2zm4 0V9H9v7h2zm4 0V9h-2v7h2z"/></svg>

<!-- ============ FORMAT BOX ============ -->
<div class="box" style="top:227px;height:299px"></div>
<div class="abs" style="left:811px;top:260px;width:250px;height:1px;background:#eee"></div>
<span class="m" style="left:822px;top:239px;font-weight:bold;font-size:12.5px;color:#23282d">Format</span>
<div class="abs" style="left:1042px;top:242.500px;width:0;height:0;border-left:3.700px solid transparent;border-right:3.700px solid transparent;border-bottom:5.200px solid #82878c"></div>
<div class="abs rad" style="left:821.5px;top:273.6px"></div><div class="abs" style="left:825.5px;top:277.6px;width:6.500px;height:6.500px;border-radius:50%;background:#1e8cbe"></div><svg style="left:843.2px;top:271.6px" width="17.5" height="17.5" viewBox="0 0 20 20" fill="#82878c"><path d="M10.44 3.02l1.82-1.82 6.36 6.35-1.83 1.82c-1.05-.68-2.48-.57-3.41.36l-.75.75c-.92.93-1.04 2.35-.35 3.41l-1.83 1.82-2.41-2.41-2.8 2.79c-.42.42-3.38 2.71-3.8 2.29s1.86-3.39 2.28-3.81l2.79-2.79L4.1 9.36l1.83-1.82c1.05.69 2.48.57 3.4-.36l.75-.75c.93-.92 1.05-2.35.36-3.41z"/></svg><span class="m fl" style="left:867.5px;top:274.4px">Standard</span>
<div class="abs rad" style="left:821.5px;top:298.5px"></div><svg style="left:843.2px;top:296.5px" width="17.5" height="17.5" viewBox="0 0 20 20" fill="#dcdcde"><path d="M1 1h18v12l-6 6H1V1zm3 3v1h12V4H4zm0 4v1h12V8H4zm6 5v-1H4v1h6zm2 4l5-5h-5v5z"/></svg><span class="m fl" style="left:867.5px;top:299.2px">Aside</span>
<div class="abs rad" style="left:821.5px;top:323.3px"></div><svg style="left:843.2px;top:321.3px" width="17.5" height="17.5" viewBox="0 0 20 20" fill="#dcdcde"><path d="M6.990 3.080l11.020-2c.550-.080.990.450.990 1V14.500c0 1.940-1.570 3.500-3.500 3.500S12 16.440 12 14.500c0-1.930 1.570-3.500 3.500-3.500.540 0 1.040.140 1.500.350V5.080l-9 2V16c-.240 1.700-1.740 3-3.500 3C2.570 19 1 17.440 1 15.500 1 13.570 2.570 12 4.500 12c.540 0 1.040.140 1.500.350V4.080c0-.550.440-.910.990-1z"/></svg><span class="m fl" style="left:867.5px;top:324.0px">Audio</span>
<div class="abs rad" style="left:821.5px;top:348.0px"></div><svg style="left:843.2px;top:346.0px" width="17.5" height="17.5" viewBox="0 0 20 20" fill="#dcdcde"><path d="M11 6h-.820C9.070 6 8 7.200 8 8.160V10l-3 3v-3H3c-1.100 0-2-.9-2-2V3c0-1.100.9-2 2-2h6c1.100 0 2 .9 2 2v3zm0 1h6c1.100 0 2 .9 2 2v5c0 1.100-.9 2-2 2h-2v3l-3-3h-1c-1.100 0-2-.9-2-2V9c0-1.100.9-2 2-2z"/></svg><span class="m fl" style="left:867.5px;top:348.8px">Chat</span>
<div class="abs rad" style="left:821.5px;top:372.8px"></div><svg style="left:843.2px;top:370.8px" width="17.5" height="17.5" viewBox="0 0 20 20" fill="#dcdcde"><path d="M16 4h1.960c.570 0 1.040.470 1.040 1.040v12.920c0 .570-.470 1.040-1.040 1.040H5.040C4.470 19 4 18.530 4 17.960V16H2.040C1.470 16 1 15.530 1 14.960V2.040C1 1.470 1.470 1 2.040 1h12.920c.570 0 1.040.470 1.040 1.040V4zM3 14h11V3H3v11zm5-8.500C8 4.670 7.330 4 6.500 4S5 4.670 5 5.500 5.670 7 6.500 7 8 6.330 8 5.500zm2 4.500s1-5 3-5v8H4V7c2 0 2 3 2 3s.330-2 2-2 2 2 2 2zm7 7V6h-1v8.960c0 .570-.470 1.040-1.040 1.040H6v1h11z"/></svg><span class="m fl" style="left:867.5px;top:373.6px">Gallery</span>
<div class="abs rad" style="left:821.5px;top:397.6px"></div><svg style="left:843.2px;top:395.6px" width="17.5" height="17.5" viewBox="0 0 20 20" fill="#dcdcde"><path d="M2.250 1h15.500c.690 0 1.250.560 1.250 1.250v15.500c0 .690-.560 1.250-1.250 1.250H2.250C1.560 19 1 18.440 1 17.750V2.250C1 1.560 1.560 1 2.250 1zM17 17V3H3v14h14zM10 6c0-1.100-.9-2-2-2s-2 .9-2 2 .9 2 2 2 2-.9 2-2zm3 5s0-6 3-6v10c0 .55-.45 1-1 1H5c-.55 0-1-.45-1-1V8c2 0 3 4 3 4s1-3 3-3 3 2 3 2z"/></svg><span class="m fl" style="left:867.5px;top:398.4px">Image</span>
<div class="abs rad" style="left:821.5px;top:422.5px"></div><svg style="left:843.2px;top:420.5px" width="17.5" height="17.5" viewBox="0 0 20 20" fill="#dcdcde"><path d="M17.740 2.760c1.680 1.690 1.680 4.410 0 6.100l-1.530 1.520c-1.120 1.120-2.700 1.470-4.140 1.090l2.620-2.610.760-.770.760-.760c.840-.840.840-2.200 0-3.040-.840-.850-2.200-.850-3.040 0l-.770.760-3.380 3.380c-.370-1.440-.020-3.020 1.100-4.140l1.520-1.530c1.690-1.680 4.420-1.680 6.100 0zM8.590 13.430l5.340-5.340c.420-.420.420-1.100 0-1.520-.440-.430-1.130-.390-1.530 0l-5.330 5.340c-.420.420-.420 1.100 0 1.520.440.430 1.130.390 1.520 0zm-.760 2.290l4.140-4.150c.380 1.440.030 3.020-1.090 4.140l-1.520 1.530c-1.690 1.680-4.410 1.680-6.100 0-1.680-1.680-1.680-4.420 0-6.100l1.530-1.520c1.120-1.120 2.700-1.470 4.140-1.100l-4.140 4.150c-.850.840-.850 2.200 0 3.050.840.840 2.200.840 3.040 0z"/></svg><span class="m fl" style="left:867.5px;top:423.2px">Link</span>
<div class="abs rad" style="left:821.5px;top:447.3px"></div><svg style="left:843.2px;top:445.3px" width="17.5" height="17.5" viewBox="0 0 20 20" fill="#dcdcde"><path d="M9.490 13.220c0-.740-.2-1.380-.610-1.900-.620-.780-1.830-.880-2.530-.720-.290-1.650 1.110-3.750 2.920-4.650L7.880 4c-2.730 1.300-5.420 4.280-4.960 8.050C3.210 14.430 4.590 16 6.540 16c.850 0 1.560-.250 2.120-.750s.830-1.180.830-2.030zm8.050 0c0-.740-.2-1.380-.610-1.900-.630-.780-1.830-.880-2.530-.720-.290-1.650 1.110-3.750 2.920-4.650L15.930 4c-2.730 1.300-5.410 4.280-4.950 8.050.290 2.380 1.660 3.950 3.610 3.950.850 0 1.560-.250 2.120-.750s.830-1.180.830-2.030z"/></svg><span class="m fl" style="left:867.5px;top:448.0px">Quote</span>
<div class="abs rad" style="left:821.5px;top:472.0px"></div><svg style="left:843.2px;top:470.0px" width="17.5" height="17.5" viewBox="0 0 20 20" fill="#dcdcde"><path d="M10 1c7 0 9 2.910 9 6.500S17 14 10 14s-9-2.910-9-6.500S3 1 10 1zM5.500 9C6.330 9 7 8.330 7 7.500S6.330 6 5.500 6 4 6.670 4 7.500 4.670 9 5.500 9zM10 9c.830 0 1.500-.670 1.500-1.500S10.830 6 10 6s-1.500.670-1.500 1.500S9.170 9 10 9zm4.500 0c.830 0 1.500-.670 1.500-1.500S15.330 6 14.500 6 13 6.670 13 7.500 13.670 9 14.500 9zM6 14.500c.830 0 1.500.670 1.500 1.500s-.670 1.500-1.500 1.500-1.500-.670-1.500-1.500.670-1.500 1.500-1.500zm-3 2c.55 0 1 .45 1 1s-.45 1-1 1-1-.45-1-1 .45-1 1-1z"/></svg><span class="m fl" style="left:867.5px;top:472.8px">Status</span>
<div class="abs rad" style="left:821.5px;top:496.9px"></div><svg style="left:843.2px;top:494.9px" width="17.5" height="17.5" viewBox="0 0 20 20" fill="#dcdcde"><path d="M2 1h16c.55 0 1 .45 1 1v16l-18-.020V2c0-.55.45-1 1-1zm4 1L4 5h1l2-3H6zm4 0H9L7 5h1zm3 0h-1l-2 3h1zm3 0h-1l-2 3h1zm1 14V6H3v10h14zM8 7l6 4-6 4V7z"/></svg><span class="m fl" style="left:867.5px;top:497.6px">Video</span>

<!-- ============ TOOLTIP ============ -->
<div class="abs" id="tip" style="left:521px;top:260px;width:280px;height:127px;background:#fff;box-shadow:0 1px 4px rgba(0,0,0,.25)"></div>
<div class="abs" style="left:521px;top:260px;width:280px;height:44px;background:#32aed6"></div>
<div class="abs" style="left:800px;top:269px;width:0;height:0;border-top:13px solid transparent;border-bottom:13px solid transparent;border-left:13px solid #32aed6"></div>
<div class="abs" style="left:535.500px;top:267.200px;width:28.800px;height:28.800px;border-radius:50%;background:#fff"></div>
<span class="t" style="left:572.300px;top:273.800px;font-size:14.800px;font-weight:bold;color:#fff">Post Formats</span>
<span class="t tp" style="left:538.300px;top:316.100px;font-size:15.200px;letter-spacing:0.040px;color:#777">To change the Post Format, select</span>
<span class="t tp" style="left:538.300px;top:333.500px;font-size:15.200px;letter-spacing:0.120px;color:#777">one of the available radio buttons.</span>
<span class="t tp" style="left:538.300px;top:350.800px;font-size:15.200px;letter-spacing:0.080px;color:#777">Not all Themes support Post</span>
<span class="t tp" style="left:538.300px;top:368.200px;font-size:15.200px;color:#777">Formats</span>
<svg style="left:0;top:0" width="1080" height="540" viewBox="0 0 1080 540" fill="#32aed6"><rect x="541.5" y="273.300" width="1.500" height="16.600" rx="0.700"/><path d="M543.800 275.200C546.500 273.700 549 273.900 551.500 275.200C554 276.500 557 276.600 560.300 274.900L560.300 284.600C557 286.300 554 286.200 551.500 284.900C549 283.600 546.500 283.400 543.800 284.900Z"/></svg>

</body>
</html>
